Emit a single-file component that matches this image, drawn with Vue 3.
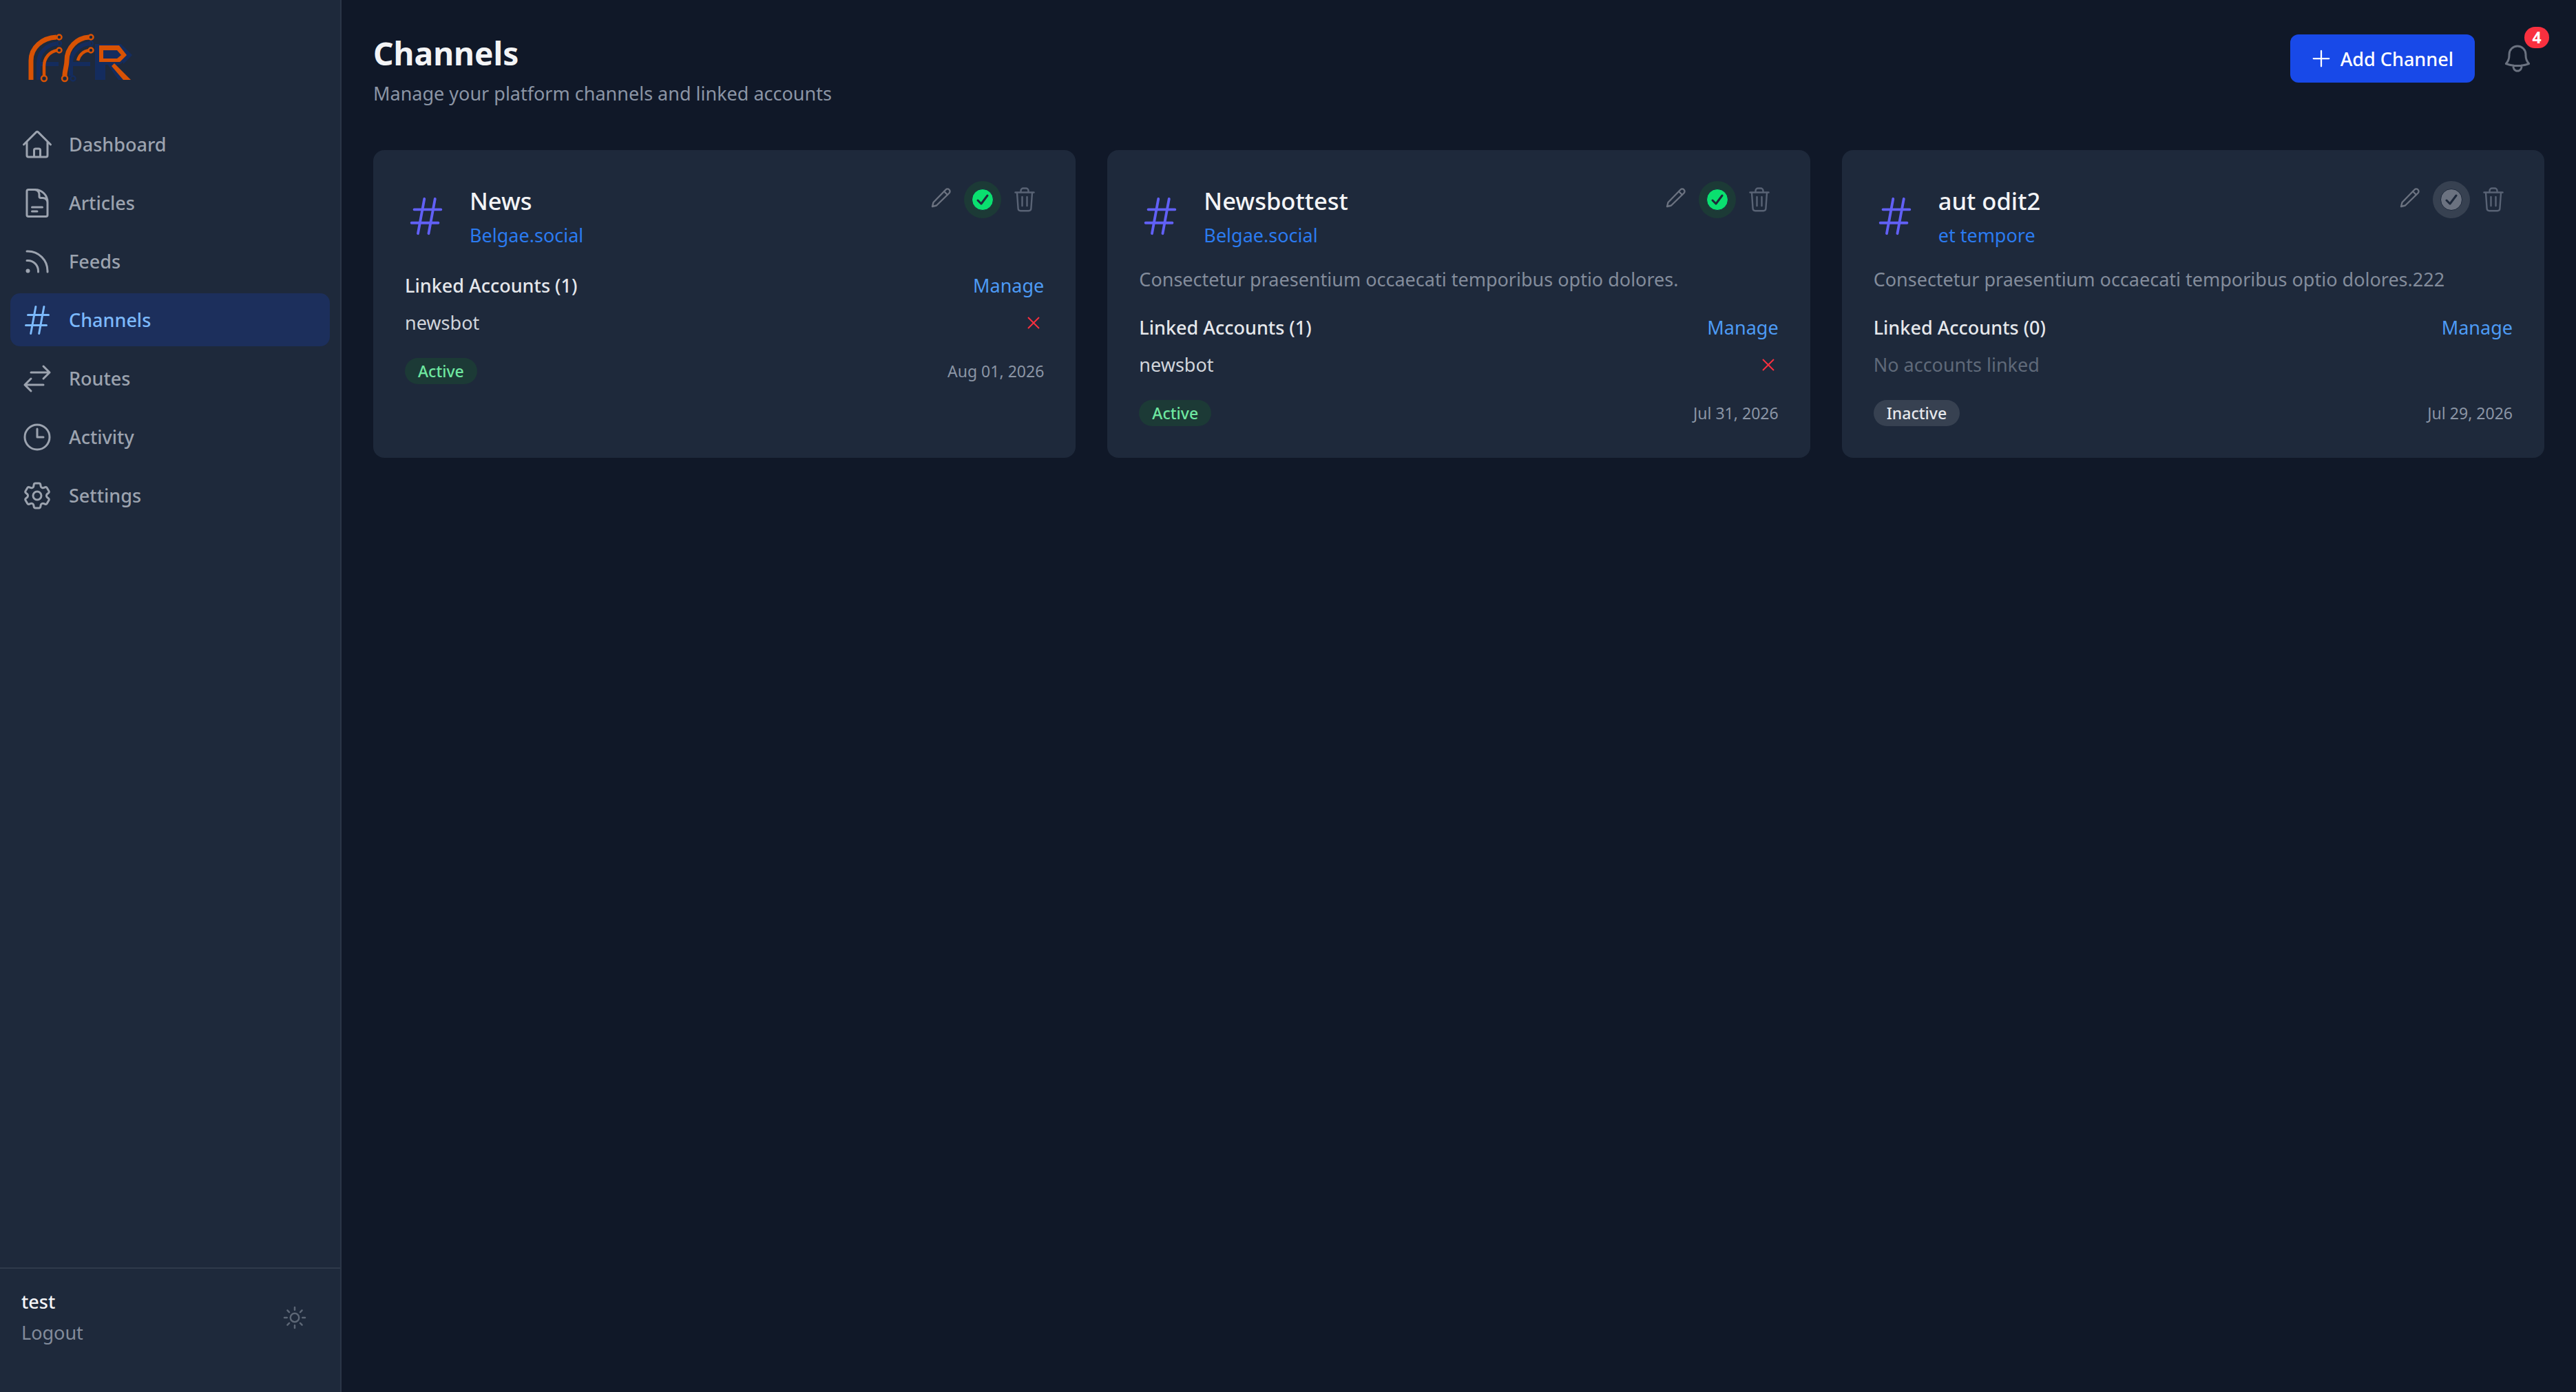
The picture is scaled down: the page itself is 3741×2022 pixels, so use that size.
<script setup>
const navItems = [
  { label: 'Dashboard', paths: ['m2.25 12 8.954-8.955c.44-.439 1.152-.439 1.591 0L21.75 12M4.5 9.75v10.125c0 .621.504 1.125 1.125 1.125H9.75v-4.875c0-.621.504-1.125 1.125-1.125h2.25c.621 0 1.125.504 1.125 1.125V21h4.125c.621 0 1.125-.504 1.125-1.125V9.75M8.25 21h8.25'] },
  { label: 'Articles', paths: ['M19.5 14.25v-2.625a3.375 3.375 0 0 0-3.375-3.375h-1.5A1.125 1.125 0 0 1 13.5 7.125v-1.5a3.375 3.375 0 0 0-3.375-3.375H8.25m0 12.75h7.5m-7.5 3H12M10.5 2.25H5.625c-.621 0-1.125.504-1.125 1.125v17.25c0 .621.504 1.125 1.125 1.125h12.75c.621 0 1.125-.504 1.125-1.125V11.25a9 9 0 0 0-9-9Z'] },
  { label: 'Feeds', paths: ['M12.75 19.5v-.75a7.5 7.5 0 0 0-7.5-7.5H4.5m0-6.75h.75c7.87 0 14.25 6.38 14.25 14.25v.75M6 18.75a.75.75 0 1 1-1.5 0 .75.75 0 0 1 1.5 0Z'] },
  { label: 'Channels', active: true, paths: ['M5.25 8.25h15m-16.5 7.5h15m-1.8-13.5-3.6 19.5m-2.4-19.5-3.6 19.5'] },
  { label: 'Routes', paths: ['M7.5 21 3 16.5m0 0L7.5 12M3 16.5h13.5m0-13.5L21 7.5m0 0L16.5 12M21 7.5H7.5'] },
  { label: 'Activity', paths: ['M12 6v6h4.5m4.5 0a9 9 0 1 1-18 0 9 9 0 0 1 18 0Z'] },
  { label: 'Settings', paths: ['M9.594 3.94c.09-.542.56-.94 1.11-.94h2.593c.55 0 1.02.398 1.11.94l.213 1.281c.063.374.313.686.645.87.074.04.147.083.22.127.325.196.72.257 1.075.124l1.217-.456a1.125 1.125 0 0 1 1.37.49l1.296 2.247a1.125 1.125 0 0 1-.26 1.431l-1.003.827c-.293.241-.438.613-.43.992a7.723 7.723 0 0 1 0 .255c-.008.378.137.75.43.991l1.004.827c.424.35.534.955.26 1.43l-1.298 2.247a1.125 1.125 0 0 1-1.369.491l-1.217-.456c-.355-.133-.75-.072-1.076.124a6.47 6.47 0 0 1-.22.128c-.331.183-.581.495-.644.869l-.213 1.281c-.09.543-.56.94-1.11.94h-2.594c-.55 0-1.019-.398-1.11-.94l-.213-1.281c-.062-.374-.312-.686-.644-.87a6.52 6.52 0 0 1-.22-.127c-.325-.196-.72-.257-1.076-.124l-1.217.456a1.125 1.125 0 0 1-1.369-.49l-1.297-2.247a1.125 1.125 0 0 1 .26-1.431l1.004-.827c.292-.24.437-.613.43-.991a6.932 6.932 0 0 1 0-.255c.007-.38-.138-.751-.43-.992l-1.004-.827a1.125 1.125 0 0 1-.26-1.43l1.297-2.247a1.125 1.125 0 0 1 1.37-.491l1.216.456c.356.133.751.072 1.076-.124.072-.044.146-.086.22-.128.332-.183.582-.495.644-.869l.214-1.28Z', 'M15 12a3 3 0 1 1-6 0 3 3 0 0 1 6 0Z'] },
];

const hashPath = 'M5.25 8.25h15m-16.5 7.5h15m-1.8-13.5-3.6 19.5m-2.4-19.5-3.6 19.5';

const channels = [
  { name: 'News', link: 'Belgae.social', description: '', accounts: ['newsbot'], active: true, date: 'Aug 01, 2026' },
  { name: 'Newsbottest', link: 'Belgae.social', description: 'Consectetur praesentium occaecati temporibus optio dolores.', accounts: ['newsbot'], active: true, date: 'Jul 31, 2026' },
  { name: 'aut odit2', link: 'et tempore', description: 'Consectetur praesentium occaecati temporibus optio dolores.222', accounts: [], active: false, date: 'Jul 29, 2026' },
];
</script>

<template>
  <div class="layout">
    <aside class="sidebar">
      <svg class="logo" viewBox="40 48 155 72" width="155" height="72" fill="none">
        <!-- navy layer -->
        <g stroke="#142c5e">
          <path d="M56 116V92c0-16 12-28 29-29" stroke-width="6" />
          <path d="M57 93h28" stroke-width="6" />
          <circle cx="86" cy="63" r="3" stroke-width="2" />
          <path d="M103 110V92c0-16 12-28 29-29" stroke-width="6" />
          <path d="M104 93h27" stroke-width="6" />
          <circle cx="132" cy="63" r="3" stroke-width="2" />
          <circle cx="106" cy="114" r="3.5" stroke-width="2.5" />
        </g>
        <g fill="#142c5e">
          <path d="M138 64h38l3 4v-1l13 13-13 13v-3l-6 4h-20v22h-15Z" />
          <path d="M155 92h13l17 24h-13Z" />
        </g>
        <!-- orange layer -->
        <g stroke="#d85204">
          <path d="M45 116V88c0-19 16-33 37-34" stroke-width="7" />
          <circle cx="86" cy="54" r="3.5" stroke-width="2.5" />
          <path d="M64 110V96c0-12 8-21 19-23" stroke-width="4.5" />
          <circle cx="86" cy="73" r="3.5" stroke-width="2.5" />
          <circle cx="64" cy="114" r="4" stroke-width="2.5" />
          <path d="M94 110c0-8 3-14 3-22 0-19 15-33 32-34" stroke-width="7" />
          <circle cx="132" cy="54" r="3.5" stroke-width="2.5" />
          <path d="M113 88c2-8 8-14 17-15" stroke-width="4.5" />
          <circle cx="132" cy="73" r="3.5" stroke-width="2.5" />
          <circle cx="94" cy="114" r="4" stroke-width="2.5" />
        </g>
        <path fill-rule="evenodd" d="M144 66h29l11 14-10 10h-30ZM150 73v12h20l6-5-6-7Z" fill="#d85204" />
        <path d="M166 92l24 24h-11l-17-20Z" fill="#d85204" />
      </svg>

      <nav class="nav">
        <a v-for="item in navItems" :key="item.label" class="nav-item" :class="{ active: item.active }">
          <svg class="nav-icon" viewBox="0 0 24 24" fill="none" stroke="currentColor" stroke-width="1.5" stroke-linecap="round" stroke-linejoin="round">
            <path v-for="d in item.paths" :key="d" :d="d" />
          </svg>
          <span>{{ item.label }}</span>
        </a>
      </nav>

      <div class="user-box">
        <div>
          <div class="username">test</div>
          <div class="logout">Logout</div>
        </div>
        <svg class="sun" viewBox="0 0 24 24" fill="none" stroke="currentColor" stroke-width="1.5" stroke-linecap="round" stroke-linejoin="round">
          <path d="M12 3v2.25m6.364.386-1.591 1.591M21 12h-2.25m-.386 6.364-1.591-1.591M12 18.75V21m-4.773-4.227-1.591 1.591M5.25 12H3m4.227-4.773L5.636 5.636M15.75 12a3.75 3.75 0 1 1-7.5 0 3.75 3.75 0 0 1 7.5 0Z" />
        </svg>
      </div>
    </aside>

    <main class="main">
      <header class="page-head">
        <div>
          <h1>Channels</h1>
          <p>Manage your platform channels and linked accounts</p>
        </div>
        <div class="head-actions">
          <button class="add-btn">
            <svg viewBox="0 0 24 24" fill="none" stroke="currentColor" stroke-width="1.5" stroke-linecap="round">
              <path d="M12 4.5v15m7.5-7.5h-15" />
            </svg>
            Add Channel
          </button>
          <div class="bell">
            <svg viewBox="0 0 24 24" fill="none" stroke="currentColor" stroke-width="1.5" stroke-linecap="round" stroke-linejoin="round">
              <path d="M14.857 17.082a23.848 23.848 0 0 0 5.454-1.31A8.967 8.967 0 0 1 18 9.75V9A6 6 0 0 0 6 9v.75a8.967 8.967 0 0 1-2.312 6.022c1.733.64 3.56 1.085 5.455 1.31m5.714 0a24.255 24.255 0 0 1-5.714 0m5.714 0a3 3 0 1 1-5.714 0" />
            </svg>
            <span class="bell-badge">4</span>
          </div>
        </div>
      </header>

      <section class="cards">
        <article v-for="channel in channels" :key="channel.name" class="card">
          <div class="card-top">
            <svg class="hash" viewBox="0 0 24 24" fill="none" stroke="currentColor" stroke-width="1.5" stroke-linecap="round" stroke-linejoin="round">
              <path :d="hashPath" />
            </svg>
            <div class="card-title">
              <div class="name">{{ channel.name }}</div>
              <div class="link">{{ channel.link }}</div>
            </div>
            <div class="card-actions">
              <svg class="pencil" viewBox="0 0 30 30" fill="none" stroke="currentColor" stroke-width="2.4" stroke-linecap="round" stroke-linejoin="round">
                <path d="M2 28l1.5-6L21.5 3.5a3 3 0 0 1 5 5L8 26.5Z" />
                <path d="M19 6l5 5" />
              </svg>
              <span class="toggle" :class="{ on: channel.active }">
                <svg viewBox="0 0 32 32">
                  <circle cx="16" cy="16" r="15.5" fill="currentColor" />
                  <path d="M9 17l5 5 9-12" fill="none" stroke-width="3" stroke-linecap="round" stroke-linejoin="round" />
                </svg>
              </span>
              <svg class="trash" viewBox="0 0 30 36" fill="none" stroke="currentColor" stroke-width="2.4" stroke-linecap="round" stroke-linejoin="round">
                <path d="M1.5 7.5h27" />
                <path d="M9.5 7V5a3.5 3.5 0 0 1 3.5-3.5h4A3.5 3.5 0 0 1 20.5 5v2" />
                <path d="M4 8l1.6 23a3.5 3.5 0 0 0 3.5 3.2h11.8a3.5 3.5 0 0 0 3.5-3.2L26 8" />
                <path d="M11.5 14v13M18.5 14v13" />
              </svg>
            </div>
          </div>

          <p v-if="channel.description" class="description">{{ channel.description }}</p>

          <div class="linked">
            <div class="linked-head">
              <span class="linked-title">Linked Accounts ({{ channel.accounts.length }})</span>
              <a class="manage">Manage</a>
            </div>
            <div v-for="account in channel.accounts" :key="account" class="account">
              <span>{{ account }}</span>
              <svg class="remove" viewBox="0 0 18 18" fill="none" stroke="currentColor" stroke-width="2">
                <path d="M1 1l16 16M17 1L1 17" />
              </svg>
            </div>
            <div v-if="!channel.accounts.length" class="no-accounts">No accounts linked</div>
          </div>

          <div class="card-foot">
            <span class="status" :class="{ on: channel.active }">{{ channel.active ? 'Active' : 'Inactive' }}</span>
            <span class="date">{{ channel.date }}</span>
          </div>
        </article>
      </section>
    </main>
  </div>
</template>

<style scoped>
.layout {
  display: flex;
  height: 2022px;
  background: #101828;
  font-family: "Noto Sans", sans-serif;
  font-size: 27px;
  color: #f3f4f6;
}

.sidebar {
  width: 496px;
  flex-shrink: 0;
  display: flex;
  flex-direction: column;
  background: #1e293b;
  border-right: 2px solid #2b3647;
  box-sizing: border-box;
}

.logo {
  display: block;
  margin: 48px 0 51px 40px;
}

.nav {
  display: flex;
  flex-direction: column;
  gap: 8px;
  padding: 0 15px;
}

.nav-item {
  display: flex;
  align-items: center;
  gap: 22px;
  height: 77px;
  padding: 0 15px;
  border-radius: 14px;
  color: #9ca3af;
  font-weight: 500;
  line-height: 40px;
}

.nav-item.active {
  background: #1c2f5c;
  color: #7cb9fb;
}

.nav-icon {
  width: 48px;
  height: 48px;
  flex-shrink: 0;
}

.user-box {
  margin-top: auto;
  height: 181px;
  box-sizing: border-box;
  border-top: 2px solid #2f3a4b;
  padding: 0 46px 38px 31px;
  display: flex;
  align-items: center;
  justify-content: space-between;
  line-height: 40px;
}

.username {
  color: #f3f4f6;
  font-weight: 500;
  margin-bottom: 5px;
}

.logout {
  color: #838c9b;
}

.sun {
  width: 40px;
  height: 40px;
  color: #5c6675;
}

.main {
  flex: 1;
  min-width: 0;
  padding: 46px;
  box-sizing: border-box;
}

.page-head {
  display: flex;
  justify-content: space-between;
  align-items: flex-start;
  margin-bottom: 62px;
}

h1 {
  margin: 0;
  font-size: 46.08px;
  font-weight: 700;
  line-height: 64px;
}

.page-head p {
  margin: 6px 0 0;
  line-height: 40px;
  color: #8b95a5;
}

.head-actions {
  display: flex;
  align-items: center;
  gap: 38px;
  margin-top: 4px;
  margin-right: 15px;
}

.add-btn {
  display: flex;
  align-items: center;
  gap: 10px;
  height: 70px;
  padding: 0 31px 0 27px;
  border: none;
  border-radius: 12px;
  background: #1849e8;
  color: #fff;
  font: 500 27px "Noto Sans", sans-serif;
}

.add-btn svg {
  width: 36px;
  height: 36px;
}

.bell {
  position: relative;
  width: 48px;
  height: 48px;
  color: #6b7280;
}

.bell svg {
  display: block;
  width: 48px;
  height: 48px;
}

.bell-badge {
  position: absolute;
  top: -22px;
  left: 34px;
  width: 36px;
  height: 31px;
  border-radius: 16px;
  background: #f9303f;
  color: #fff;
  font-size: 23.04px;
  font-weight: 700;
  line-height: 31px;
  text-align: center;
}

.cards {
  display: grid;
  grid-template-columns: repeat(3, 1fr);
  gap: 46px;
}

.card {
  padding: 46px;
  border-radius: 16px;
  background: #1e293b;
}

.card-top {
  display: flex;
  align-items: flex-start;
}

.hash {
  width: 62px;
  height: 62px;
  flex-shrink: 0;
  margin: 19px 32px 0 0;
  color: #6160f5;
}

.card-title {
  flex: 1;
  min-width: 0;
}

.name {
  font-size: 34.56px;
  font-weight: 500;
  line-height: 55px;
}

.link {
  line-height: 46px;
  color: #2b7bf0;
}

.card-actions {
  display: flex;
  align-items: center;
  gap: 18px;
  margin-right: 13px;
  margin-top: -1px;
  height: 54px;
}

.pencil {
  width: 30px;
  height: 30px;
  margin-top: -6px;
  color: #6b7280;
}

.toggle {
  display: flex;
  align-items: center;
  justify-content: center;
  width: 54px;
  height: 54px;
  border-radius: 50%;
  background: #374151;
  color: #6b7280;
}

.toggle.on {
  background: #1c3a36;
  color: #0ae06f;
}

.toggle svg {
  width: 32px;
  height: 32px;
  stroke: #1e293b;
}

.trash {
  width: 30px;
  height: 36px;
  margin-left: 1px;
  color: #596375;
}

.description {
  margin: 21px 0 0;
  line-height: 40px;
  color: #838c9b;
}

.linked {
  margin-top: 30px;
}

.linked-head {
  display: flex;
  justify-content: space-between;
  line-height: 40px;
  color: #e5e7eb;
}

.linked-title {
  font-weight: 500;
}

.manage {
  color: #4d9bf5;
}

.account {
  display: flex;
  justify-content: space-between;
  align-items: center;
  margin-top: 14px;
  line-height: 40px;
  color: #d1d5db;
}

.remove {
  width: 18px;
  height: 18px;
  margin-right: 6px;
  color: #f8303f;
}

.no-accounts {
  margin-top: 14px;
  line-height: 40px;
  color: #5f6979;
}

.card-foot {
  display: flex;
  justify-content: space-between;
  align-items: center;
  margin-top: 31px;
}

.status {
  height: 38px;
  padding: 0 19px;
  border-radius: 19px;
  background: #374151;
  color: #e5e7eb;
  font-size: 23.04px;
  font-weight: 500;
  line-height: 38px;
}

.status.on {
  background: #1c3a36;
  color: #6ee7a0;
}

.date {
  font-size: 23.04px;
  color: #8b95a5;
}
</style>

<style>
html,
body {
  margin: 0;
  background: #101828;
}
</style>
